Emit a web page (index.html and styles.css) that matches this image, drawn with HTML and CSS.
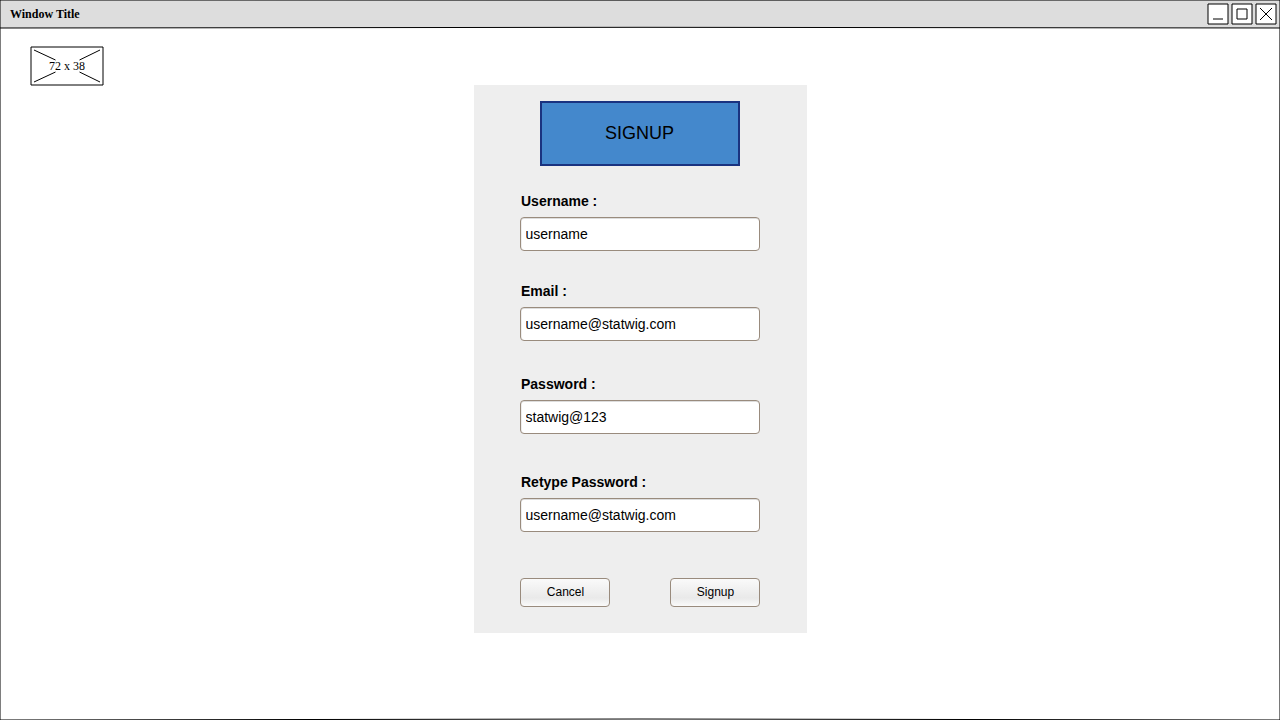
FILE: index.html
```
<!DOCTYPE html>
<html lang="en">
<head>
<meta charset="utf-8">
<title>Window Title</title>
<link rel="stylesheet" href="styles.css">
</head>
<body>
<div class="window">
  <svg class="window-frame" width="1280" height="720" viewBox="0 0 1280 720" aria-hidden="true">
    <path class="title-fill" d="M0 0H1280V28Q640 26.6 0 28Z"/>
    <path d="M0 0Q640 0.2 1280 0Q1279 360 1280 720Q640 718 0 720Q0.2 360 0 0Z"/>
    <path d="M0 28Q640 26.6 1280 28"/>
  </svg>
  <header class="title-bar">
    <h1 class="window-title">Window Title</h1>
    <div class="window-controls">
      <svg width="22" height="22" viewBox="0 0 22 22"><path class="control-box" d="M1 1H21V21H1Z"/><path d="M6 16H16"/></svg>
      <svg width="22" height="22" viewBox="0 0 22 22"><path class="control-box" d="M1 1H21V21H1Z"/><path d="M6 6H16V16H6Z"/></svg>
      <svg width="22" height="22" viewBox="0 0 22 22"><path class="control-box" d="M1 1H21V21H1Z"/><path d="M5 5L17 17M17 5L5 17"/></svg>
    </div>
  </header>
  <main class="content">
    <div class="image-placeholder">
      <svg class="placeholder-lines" width="74" height="40" viewBox="0 0 74 40"><path d="M1 1H73V39H1Z"/><path d="M4 4L25.500 14M70 4L49.500 14M4 36L25.500 26M70 36L49.500 26"/></svg>
      <span class="placeholder-size">72 x 38</span>
    </div>
    <form class="signup-panel">
      <h2 class="banner">SIGNUP</h2>
      <div class="field">
        <label for="username">Username :</label>
        <input id="username" type="text" value="username">
      </div>
      <div class="field field-email">
        <label for="email">Email :</label>
        <input id="email" type="text" value="username@statwig.com">
      </div>
      <div class="field field-password">
        <label for="password">Password :</label>
        <input id="password" type="text" value="statwig@123">
      </div>
      <div class="field field-retype">
        <label for="retype">Retype Password :</label>
        <input id="retype" type="text" value="username@statwig.com">
      </div>
      <div class="actions">
        <button type="button">Cancel</button>
        <button type="button">Signup</button>
      </div>
    </form>
  </main>
</div>
</body>
</html>
```
FILE: styles.css
```
* {
  box-sizing: border-box;
}

body {
  margin: 0;
  background: #fff;
  color: #000;
  font-family: "Liberation Sans", Arial, sans-serif;
}

.window {
  position: relative;
  width: 1280px;
  height: 720px;
  overflow: hidden;
}

svg {
  display: block;
  fill: none;
  stroke: #000;
  stroke-width: 1;
}

.window-frame {
  position: absolute;
  inset: 0;
}

.window-frame .title-fill {
  fill: #ddd;
  stroke: none;
}

.title-bar {
  position: relative;
  display: flex;
  justify-content: space-between;
  height: 28px;
  padding: 3px 3px 0 10px;
}

.window-title {
  margin: 0;
  font: bold 12px/22px "Liberation Serif", "Times New Roman", serif;
}

.window-controls {
  display: flex;
  gap: 2px;
}

.control-box {
  fill: #fff;
}

.content {
  position: relative;
  display: flex;
  align-items: flex-start;
}

.image-placeholder {
  position: relative;
  width: 74px;
  height: 40px;
  margin: 18px 0 0 30px;
}

.placeholder-size {
  position: absolute;
  inset: 0;
  font: 12px/40px "Liberation Serif", "Times New Roman", serif;
  text-align: center;
}

.signup-panel {
  width: 333px;
  height: 548px;
  margin: 57px 0 0 370px;
  padding: 16px 47px 0 46px;
  background: #eee;
}

.banner {
  width: 200px;
  height: 65px;
  margin: 0 0 27px 20px;
  padding-right: 1px;
  border: 2px solid #1a3380;
  background: #4488cc;
  font-size: 18px;
  font-weight: normal;
  line-height: 61px;
  text-align: center;
}

.field {
  display: flex;
  flex-direction: column;
  gap: 8px;
}

.field label {
  padding-left: 1px;
  font-size: 14px;
  font-weight: bold;
  line-height: 16px;
}

.field input {
  width: 240px;
  height: 34px;
  padding: 0 4.500px;
  border: 1px solid #998b7d;
  border-radius: 4px;
  background: #fff;
  box-shadow: inset 0 1px 0 #ddd, inset 1px 0 0 #eee;
  color: #000;
  font: 14px "Liberation Sans", Arial, sans-serif;
}

.field-email {
  margin-top: 32px;
}

.field-password {
  margin-top: 35px;
}

.field-retype {
  margin-top: 40px;
}

.actions {
  display: flex;
  justify-content: space-between;
  margin-top: 46px;
}

.actions button {
  width: 90px;
  height: 29px;
  padding: 0 0 1px 1px;
  border: 1px solid #998b7d;
  border-radius: 4px;
  background: linear-gradient(#fafafa 0%, #e9e9e9 70%, #fafafa 100%);
  color: #000;
  font: 12px "Liberation Sans", Arial, sans-serif;
}
```
